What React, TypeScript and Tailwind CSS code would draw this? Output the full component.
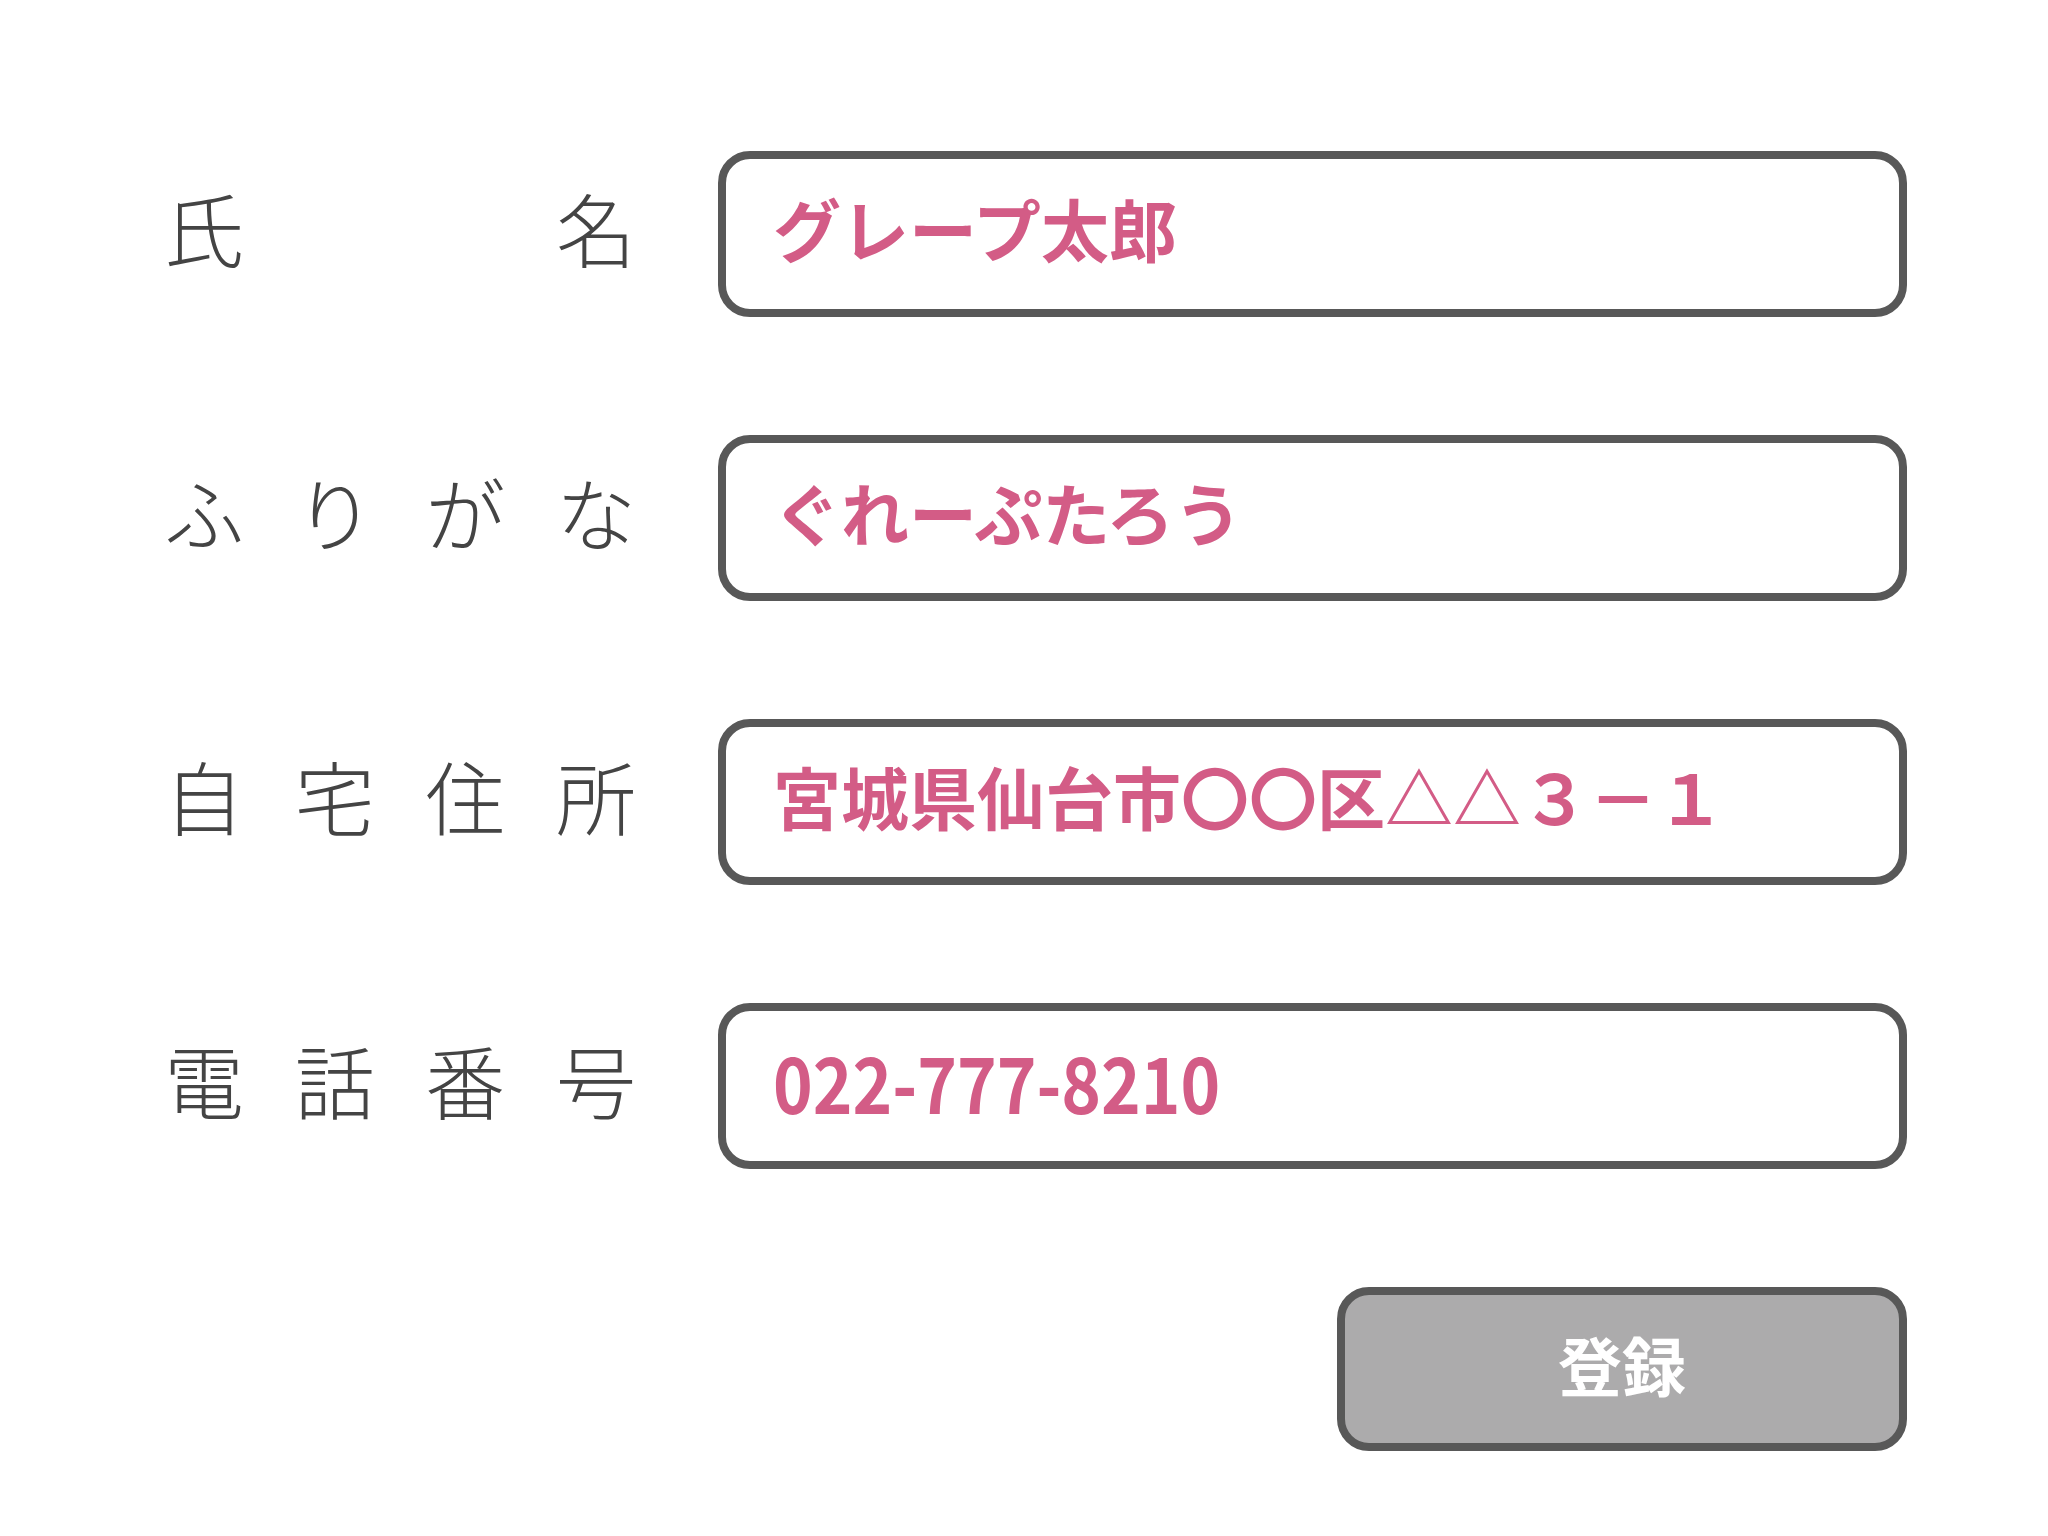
import React from "react";

const labelFont = { fontFamily: '"Noto Sans CJK JP", "Noto Sans", sans-serif' };

function Label({ chars }: { chars: string[] }) {
  return (
    <div
      className="flex h-[166px] items-center justify-between pb-4 text-[80px] font-light leading-none text-[#444444]"
      style={labelFont}
    >
      {chars.map((c, i) => (
        <span key={i}>{c}</span>
      ))}
    </div>
  );
}

function Field({ value, big }: { value: string; big?: boolean }) {
  return (
    <div className="flex h-[166px] items-center rounded-[32px] border-[8px] border-[#585858] bg-white pb-3 pl-[47px]">
      <span
        className={
          big
            ? "inline-block origin-left scale-x-[0.875] text-[77px] font-bold leading-none text-[#d35c86]"
            : "text-[68px] font-bold leading-none text-[#d35c86]"
        }
        style={labelFont}
      >
        {value}
      </span>
    </div>
  );
}

export default function App() {
  return (
    <div className="min-h-[1536px] w-[2048px] bg-white pl-[164px] pt-[151px]">
      <div className="grid grid-cols-[472px_1189px] gap-x-[82px] gap-y-[118px]">
        <Label chars={["氏", "名"]} />
        <Field value="グレープ太郎" />
        <Label chars={["ふ", "り", "が", "な"]} />
        <Field value="ぐれーぷたろう" />
        <Label chars={["自", "宅", "住", "所"]} />
        <Field value="宮城県仙台市〇〇区△△３－１" />
        <Label chars={["電", "話", "番", "号"]} />
        <Field value="022-777-8210" big />
        <div />
        <div className="flex justify-end">
          <button
            className="flex h-[164px] w-[570px] items-center justify-center rounded-[32px] border-[8px] border-[#585858] bg-[#acabac] pb-3 text-[64px] font-bold leading-none text-white"
            style={labelFont}
          >
            登録
          </button>
        </div>
      </div>
    </div>
  );
}
